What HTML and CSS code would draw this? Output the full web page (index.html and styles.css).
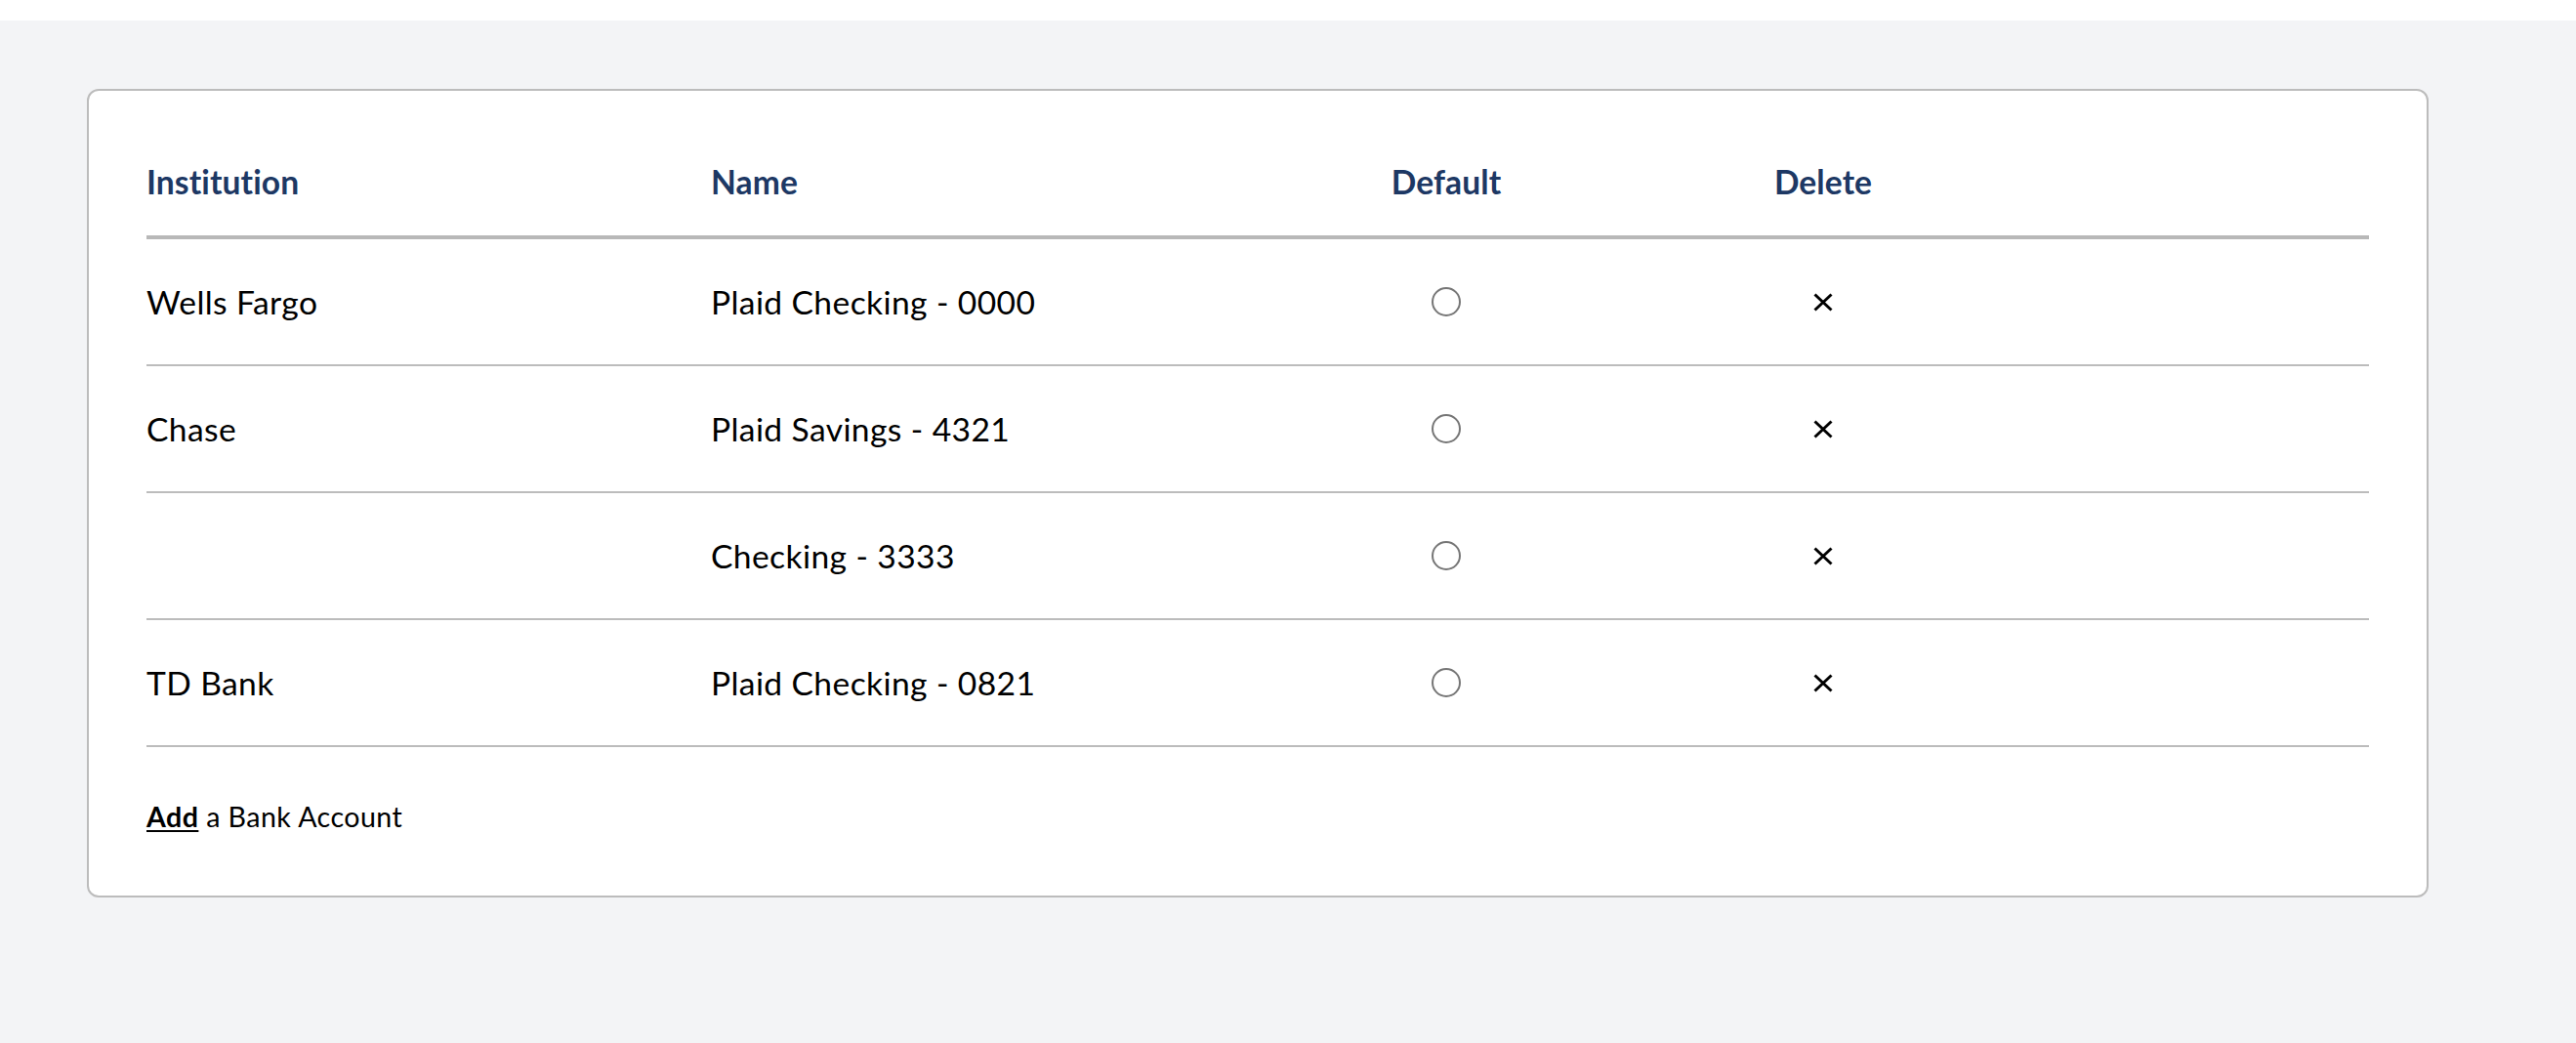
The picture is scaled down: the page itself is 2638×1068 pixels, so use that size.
FILE: index.html
```html
<!DOCTYPE html>
<html lang="en">
<head>
<meta charset="utf-8">
<title>Bank Accounts</title>
<link rel="stylesheet" href="styles.css">
</head>
<body>
<div class="topbar"></div>
<main class="page">
  <section class="card">
    <div class="table">
      <div class="row head">
        <div class="cell">Institution</div>
        <div class="cell">Name</div>
        <div class="cell center">Default</div>
        <div class="cell center">Delete</div>
        <div class="cell"></div>
      </div>
      <div class="row">
        <div class="cell">Wells Fargo</div>
        <div class="cell">Plaid Checking - 0000</div>
        <div class="cell center"><span class="radio"></span></div>
        <div class="cell center"><svg class="x" viewBox="0 0 20 19"><path d="M1.5 1.5 L18.5 17.5 M18.5 1.5 L1.5 17.5"/></svg></div>
        <div class="cell"></div>
      </div>
      <div class="row">
        <div class="cell">Chase</div>
        <div class="cell">Plaid Savings - 4321</div>
        <div class="cell center"><span class="radio"></span></div>
        <div class="cell center"><svg class="x" viewBox="0 0 20 19"><path d="M1.5 1.5 L18.5 17.5 M18.5 1.5 L1.5 17.5"/></svg></div>
        <div class="cell"></div>
      </div>
      <div class="row">
        <div class="cell"></div>
        <div class="cell">Checking - 3333</div>
        <div class="cell center"><span class="radio"></span></div>
        <div class="cell center"><svg class="x" viewBox="0 0 20 19"><path d="M1.5 1.5 L18.5 17.5 M18.5 1.5 L1.5 17.5"/></svg></div>
        <div class="cell"></div>
      </div>
      <div class="row">
        <div class="cell">TD Bank</div>
        <div class="cell">Plaid Checking - 0821</div>
        <div class="cell center"><span class="radio"></span></div>
        <div class="cell center"><svg class="x" viewBox="0 0 20 19"><path d="M1.5 1.5 L18.5 17.5 M18.5 1.5 L1.5 17.5"/></svg></div>
        <div class="cell"></div>
      </div>
    </div>
    <p class="add"><a href="#" class="add-link">Add</a> a Bank Account</p>
  </section>
</main>
</body>
</html>
```
FILE: styles.css
```css
html, body {
  margin: 0;
  padding: 0;
  background: #f3f4f6;
  font-family: "Lato", "Open Sans", sans-serif;
  color: #000;
}
.topbar {
  height: 21px;
  background: #fff;
}
.page {
  padding: 70px 0 120px 89px;
}
.card {
  width: 2276px;
  background: #fff;
  border: 2px solid #bcbcbc;
  border-radius: 12px;
  padding: 73px 59px 61px 59px;
}
.table {
  display: flex;
  flex-direction: column;
}
.row {
  display: grid;
  grid-template-columns: 578px 600px 306px 466px 1fr;
  align-items: center;
  height: 128px;
  border-bottom: 2px solid #bcbcbc;
  font-size: 33.6px;
  letter-spacing: 0.4px;
}
.row.head {
  height: auto;
  line-height: 40px;
  padding-bottom: 35px;
  border-bottom: 4px solid #b8b8b8;
  font-weight: 700;
  color: #1d3864;
  letter-spacing: 0.1px;
}
.cell {
  display: flex;
  align-items: center;
}
.cell.center {
  justify-content: center;
}
.radio {
  display: block;
  width: 26px;
  height: 26px;
  border: 2px solid #767676;
  border-radius: 50%;
}
.x {
  display: block;
  width: 20px;
  height: 19px;
}
.x path {
  stroke: #000;
  stroke-width: 3;
  fill: none;
}
.add {
  margin: 51px 0 0 0;
  font-size: 28.6px;
  line-height: 40px;
  letter-spacing: 0.45px;
}
.add-link {
  color: #000;
  font-weight: 700;
  text-decoration: underline;
  text-underline-offset: 3px;
}
```
